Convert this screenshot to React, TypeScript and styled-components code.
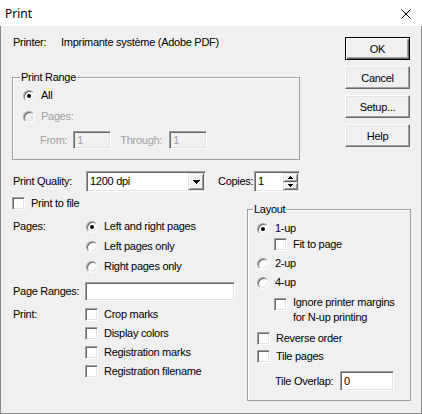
import styled, { createGlobalStyle, css } from 'styled-components'

const GlobalStyle = createGlobalStyle`
  * { box-sizing: border-box; }
  html, body { margin: 0; padding: 0; background: #ffffff; }
  body {
    font-family: 'Liberation Sans', Arial, sans-serif;
    font-size: 11px;
    letter-spacing: -0.28px;
    color: #000;
  }
`

const sunken = css`
  border: 1px solid;
  border-color: #a0a0a0 #ffffff #ffffff #a0a0a0;
  box-shadow: inset 1px 1px #696969, inset -1px -1px #e3e3e3;
`

const raised = css`
  border: 1px solid;
  border-color: #e3e3e3 #696969 #696969 #e3e3e3;
  box-shadow: inset 1px 1px #ffffff, inset -1px -1px #a0a0a0;
  background: #f0f0f0;
`

const Window = styled.div`
  width: 422px;
  height: 414px;
  display: flex;
  flex-direction: column;
  overflow: hidden;
`

const TitleBar = styled.div`
  flex: 0 0 26px;
  display: flex;
  align-items: center;
  justify-content: space-between;
  padding: 0 11px 0 5px;
  background: #fff;
  font-family: 'Noto Sans', 'Liberation Sans', sans-serif;
  font-size: 12px;
  letter-spacing: 0;
`

const CloseIcon = styled.svg`
  margin-top: 2px;
`

const Body = styled.div`
  flex: 1;
  display: flex;
  flex-direction: column;
  padding-left: 11px;
  background: #f0f0f0;
  border: 1px solid #8a8a8a;
  border-top: 0;
`

const TopSection = styled.div`
  display: flex;
`

const TopLeft = styled.div`
  width: 288px;
  padding-top: 10px;
`

const ButtonColumn = styled.div`
  display: flex;
  flex-direction: column;
  gap: 6px;
  margin-left: 45px;
  padding-top: 11px;
`

const PushButton = styled.button<{ $default?: boolean }>`
  width: 65px;
  height: 23px;
  margin: 0;
  padding: 0;
  font: inherit;
  letter-spacing: inherit;
  color: #000;
  background: #f0f0f0;
  border: 1px solid;
  border-color: #ffffff #696969 #696969 #ffffff;
  box-shadow: inset -1px -1px #a0a0a0, inset 1px 1px #e3e3e3;
  ${(p) =>
    p.$default &&
    css`
      border-color: #000;
      box-shadow: inset 1px 1px #ffffff, inset -1px -1px #696969, inset -2px -2px #a0a0a0;
    `}
`

const Line = styled.div<{ $top?: number; $left?: number; $height?: number; $align?: string }>`
  display: flex;
  align-items: ${(p) => p.$align ?? 'center'};
  gap: 6px;
  min-height: ${(p) => p.$height ?? 13}px;
  line-height: 13px;
  margin-top: ${(p) => p.$top ?? 0}px;
  margin-left: ${(p) => p.$left ?? 0}px;
`

const Label = styled.span<{ $width: number; $indent?: number }>`
  flex: 0 0 ${(p) => p.$width}px;
  margin-left: ${(p) => p.$indent ?? 0}px;
  white-space: nowrap;
`

const Caption = styled.span<{ $disabled?: boolean; $lh?: number }>`
  white-space: nowrap;
  line-height: ${(p) => p.$lh ?? 13}px;
  color: ${(p) => (p.$disabled ? '#a0a0a0' : '#000')};
`

const GroupBox = styled.div<{ $width: number; $height: number; $top: number; $padTop: number; $padLeft: number }>`
  position: relative;
  flex: 0 0 auto;
  width: ${(p) => p.$width}px;
  height: ${(p) => p.$height}px;
  margin-top: ${(p) => p.$top}px;
  padding: ${(p) => p.$padTop}px 0 0 ${(p) => p.$padLeft}px;
  border: 1px solid #a0a0a0;
  box-shadow: 1px 1px #ffffff inset;
`

const Legend = styled.span<{ $left: number }>`
  position: absolute;
  top: -7px;
  left: ${(p) => p.$left}px;
  padding: 0 1px;
  line-height: 13px;
  background: #f0f0f0;
`

const RadioMark = styled.span<{ $checked?: boolean; $disabled?: boolean }>`
  position: relative;
  flex: 0 0 12px;
  width: 12px;
  height: 12px;
  border-radius: 50%;
  background: ${(p) => (p.$disabled ? '#f0f0f0' : '#fff')};
  ${sunken}
  ${(p) =>
    p.$checked &&
    css`
      &::after {
        content: '';
        position: absolute;
        left: 3px;
        top: 3px;
        width: 4px;
        height: 4px;
        border-radius: 50%;
        background: #000;
      }
    `}
`

const CheckMark = styled.span<{ $top?: number }>`
  flex: 0 0 13px;
  width: 13px;
  height: 13px;
  margin-top: ${(p) => p.$top ?? 0}px;
  background: #fff;
  ${sunken}
`

const TextBox = styled.div<{ $width: number; $height: number; $disabled?: boolean }>`
  display: flex;
  align-items: center;
  flex: 0 0 ${(p) => p.$width}px;
  width: ${(p) => p.$width}px;
  height: ${(p) => p.$height}px;
  padding: 1px 1px 1px 3px;
  line-height: 13px;
  background: ${(p) => (p.$disabled ? '#f0f0f0' : '#fff')};
  color: ${(p) => (p.$disabled ? '#a0a0a0' : '#000')};
  ${sunken}
`

const FieldValue = styled.span`
  flex: 1;
  white-space: nowrap;
`

const DropButton = styled.span`
  display: flex;
  align-items: center;
  justify-content: center;
  width: 16px;
  height: 17px;
  ${raised}
`

const SpinStack = styled.span`
  display: flex;
  flex-direction: column;
  width: 15px;
  height: 17px;
`

const SpinButton = styled.span`
  flex: 1;
  display: flex;
  align-items: center;
  justify-content: center;
  ${raised}
`

const QualityRow = styled.div`
  display: flex;
  align-items: center;
  height: 21px;
  margin-top: 11px;
  line-height: 13px;
`

const LowerSection = styled.div`
  display: flex;
  align-items: flex-start;
`

const LowerLeft = styled.div`
  width: 235px;
  padding-top: 5px;
`

const Block = styled.div<{ $top: number }>`
  display: flex;
  align-items: flex-start;
  margin-top: ${(p) => p.$top}px;
  line-height: 13px;
`

const Stack = styled.div<{ $gap: number }>`
  display: flex;
  flex-direction: column;
  gap: ${(p) => p.$gap}px;
`

const DownArrow = () => (
  <svg width="7" height="4" viewBox="0 0 7 4" shapeRendering="crispEdges">
    <path d="M0 0h7v1h-1v1h-1v1h-1v1h-1v-1h-1v-1h-1v-1h-1z" fill="#000" />
  </svg>
)

const SmallArrow = ({ up }: { up?: boolean }) => (
  <svg width="5" height="3" viewBox="0 0 5 3" shapeRendering="crispEdges">
    {up ? (
      <path d="M0 3h5v-1h-1v-1h-1v-1h-1v1h-1v1h-1z" fill="#000" />
    ) : (
      <path d="M0 0h5v1h-1v1h-1v1h-1v-1h-1v-1h-1z" fill="#000" />
    )}
  </svg>
)

const Radio = ({ label, checked, disabled, left, top }: { label: string; checked?: boolean; disabled?: boolean; left?: number; top?: number }) => (
  <Line $left={left} $top={top}>
    <RadioMark $checked={checked} $disabled={disabled} />
    <Caption $disabled={disabled}>{label}</Caption>
  </Line>
)

const Check = ({ label, left, top }: { label: string; left?: number; top?: number }) => (
  <Line $left={left} $top={top} $height={13}>
    <CheckMark />
    <Caption>{label}</Caption>
  </Line>
)

export default function App() {
  return (
    <>
      <GlobalStyle />
      <Window>
        <TitleBar>
          <span>Print</span>
          <CloseIcon width="10" height="10" viewBox="0 0 10 10">
            <path d="M0.5 0.5L9.5 9.5M9.5 0.5L0.5 9.5" stroke="#000" strokeWidth="1" />
          </CloseIcon>
        </TitleBar>
        <Body>
          <TopSection>
            <TopLeft>
              <Line>
                <Label $width={42} $indent={1}>Printer:</Label>
                <Caption>Imprimante système (Adobe PDF)</Caption>
              </Line>
              <GroupBox $width={288} $height={83} $top={28} $padTop={11} $padLeft={10}>
                <Legend $left={7}>Print Range</Legend>
                <Radio label="All" checked />
                <Radio label="Pages:" disabled top={8} />
                <Line $top={8} $left={17} $height={18}>
                  <Label $width={27}>
                    <Caption $disabled>From:</Caption>
                  </Label>
                  <TextBox $width={38} $height={18} $disabled>
                    <FieldValue>1</FieldValue>
                  </TextBox>
                  <Label $width={43} $indent={3}>
                    <Caption $disabled>Through:</Caption>
                  </Label>
                  <TextBox $width={38} $height={18} $disabled>
                    <FieldValue>1</FieldValue>
                  </TextBox>
                </Line>
              </GroupBox>
            </TopLeft>
            <ButtonColumn>
              <PushButton $default>OK</PushButton>
              <PushButton>Cancel</PushButton>
              <PushButton>Setup...</PushButton>
              <PushButton>Help</PushButton>
            </ButtonColumn>
          </TopSection>

          <QualityRow>
            <Label $width={73} $indent={1}>Print Quality:</Label>
            <TextBox $width={120} $height={21}>
              <FieldValue>1200 dpi</FieldValue>
              <DropButton>
                <DownArrow />
              </DropButton>
            </TextBox>
            <Label $width={36} $indent={12}>Copies:</Label>
            <TextBox $width={46} $height={21}>
              <FieldValue>1</FieldValue>
              <SpinStack>
                <SpinButton>
                  <SmallArrow up />
                </SpinButton>
                <SpinButton>
                  <SmallArrow />
                </SpinButton>
              </SpinStack>
            </TextBox>
          </QualityRow>

          <LowerSection>
            <LowerLeft>
              <Check label="Print to file" />
              <Block $top={10}>
                <Label $width={73} $indent={1}>Pages:</Label>
                <Stack $gap={7}>
                  <Radio label="Left and right pages" checked />
                  <Radio label="Left pages only" />
                  <Radio label="Right pages only" />
                </Stack>
              </Block>
              <Block $top={9}>
                <Label $width={72} $indent={1}>
                  <Line $height={19}>Page Ranges:</Line>
                </Label>
                <TextBox $width={150} $height={19} />
              </Block>
              <Block $top={7}>
                <Label $width={72} $indent={1}>Print:</Label>
                <Stack $gap={6}>
                  <Check label="Crop marks" />
                  <Check label="Display colors" />
                  <Check label="Registration marks" />
                  <Check label="Registration filename" />
                </Stack>
              </Block>
            </LowerLeft>

            <GroupBox $width={164} $height={192} $top={17} $padTop={12} $padLeft={9}>
              <Legend $left={5}>Layout</Legend>
              <Radio label="1-up" checked />
              <Check label="Fit to page" left={17} top={3} />
              <Radio label="2-up" top={6} />
              <Radio label="4-up" top={6} />
              <Line $left={17} $top={6} $align="flex-start">
                <CheckMark $top={3} />
                <Caption $lh={15}>
                  Ignore printer margins
                  <br />
                  for N-up printing
                </Caption>
              </Line>
              <Check label="Reverse order" top={7} />
              <Check label="Tile pages" top={5} />
              <Line $left={18} $top={8} $height={20}>
                <Label $width={59}>Tile Overlap:</Label>
                <TextBox $width={54} $height={20}>
                  <FieldValue>0</FieldValue>
                </TextBox>
              </Line>
            </GroupBox>
          </LowerSection>
        </Body>
      </Window>
    </>
  )
}
